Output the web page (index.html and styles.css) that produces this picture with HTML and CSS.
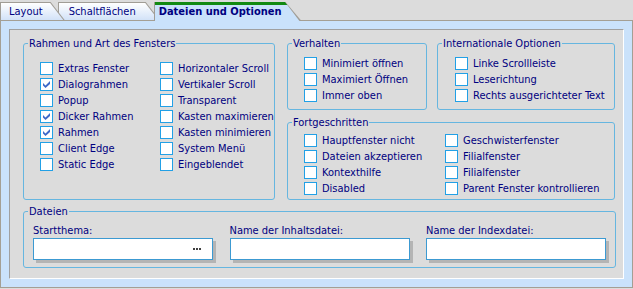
FILE: index.html
```html
<!DOCTYPE html>
<html>
  <head>
    <meta charset="utf-8">
    <title>Dateien und Optionen</title>
    <link rel="stylesheet" href="styles.css">
  </head>
  <body>
    <div class="tabs">
      <div class="tab tab-first"><div class="tab-in">Layout</div></div>
      <div class="tab tab-second"><div class="tab-in">Schaltflächen</div></div>
      <div class="tab tab-active"><div class="tab-in">Dateien und Optionen</div></div>
    </div>
    <div class="panel">
      <div class="page">
        <div class="top">
          <fieldset class="group">
            <legend>Rahmen und Art des Fensters</legend>
            <div class="checks checks-frame">
              <label class="check"><span class="box"></span>Extras Fenster</label>
              <label class="check"><span class="box checked"><svg width="11" height="11" viewBox="0 0 11 11"><polygon points="2,4 4.5,6.5 9,2 9,5 4.5,9 2,6.5"/></svg></span>Dialograhmen</label>
              <label class="check"><span class="box"></span>Popup</label>
              <label class="check"><span class="box checked"><svg width="11" height="11" viewBox="0 0 11 11"><polygon points="2,4 4.5,6.5 9,2 9,5 4.5,9 2,6.5"/></svg></span>Dicker Rahmen</label>
              <label class="check"><span class="box checked"><svg width="11" height="11" viewBox="0 0 11 11"><polygon points="2,4 4.5,6.5 9,2 9,5 4.5,9 2,6.5"/></svg></span>Rahmen</label>
              <label class="check"><span class="box"></span>Client Edge</label>
              <label class="check"><span class="box"></span>Static Edge</label>
              <label class="check"><span class="box"></span>Horizontaler Scroll</label>
              <label class="check"><span class="box"></span>Vertikaler Scroll</label>
              <label class="check"><span class="box"></span>Transparent</label>
              <label class="check"><span class="box"></span>Kasten maximieren</label>
              <label class="check"><span class="box"></span>Kasten minimieren</label>
              <label class="check"><span class="box"></span>System Menü</label>
              <label class="check"><span class="box"></span>Eingeblendet</label>
            </div>
          </fieldset>
          <div class="side">
            <div class="side-row">
              <fieldset class="group group-behaviour">
                <legend>Verhalten</legend>
                <div class="checks checks-small">
                  <label class="check"><span class="box"></span>Minimiert öffnen</label>
                  <label class="check"><span class="box"></span>Maximiert Öffnen</label>
                  <label class="check"><span class="box"></span>Immer oben</label>
                </div>
              </fieldset>
              <fieldset class="group group-intl">
                <legend>Internationale Optionen</legend>
                <div class="checks checks-small checks-intl">
                  <label class="check"><span class="box"></span>Linke Scrollleiste</label>
                  <label class="check"><span class="box"></span>Leserichtung</label>
                  <label class="check"><span class="box"></span>Rechts ausgerichteter Text</label>
                </div>
              </fieldset>
            </div>
            <fieldset class="group">
              <legend>Fortgeschritten</legend>
              <div class="checks checks-advanced">
                <label class="check"><span class="box"></span>Hauptfenster nicht</label>
                <label class="check"><span class="box"></span>Dateien akzeptieren</label>
                <label class="check"><span class="box"></span>Kontexthilfe</label>
                <label class="check"><span class="box"></span>Disabled</label>
                <label class="check"><span class="box"></span>Geschwisterfenster</label>
                <label class="check"><span class="box"></span>Filialfenster</label>
                <label class="check"><span class="box"></span>Filialfenster</label>
                <label class="check"><span class="box"></span>Parent Fenster kontrollieren</label>
              </div>
            </fieldset>
          </div>
        </div>
        <fieldset class="group group-files">
          <legend>Dateien</legend>
          <div class="fields">
            <div class="field">
              <div class="field-label">Startthema:</div>
              <div class="input"><span class="dots"></span></div>
            </div>
            <div class="field">
              <div class="field-label">Name der Inhaltsdatei:</div>
              <div class="input"></div>
            </div>
            <div class="field">
              <div class="field-label">Name der Indexdatei:</div>
              <div class="input"></div>
            </div>
          </div>
        </fieldset>
      </div>
    </div>
  </body>
</html>
```

FILE: styles.css
```css
body {
  margin: 0;
  background-color: #dcdcdc;
  font-family: "DejaVu Sans Condensed", "DejaVu Sans", sans-serif;
  font-size: 11px;
  color: #000080;
}

/* tab strip */
.tabs {
  position: relative;
  z-index: 1;
  display: flex;
  height: 20px;
  padding-top: 2px;
  box-sizing: border-box;
}
.tab {
  height: 18px;
  box-sizing: border-box;
  padding: 1px 0 0 1px;
  background-color: #a09d96;
  clip-path: polygon(0 0, calc(100% - 14px) 0, 100% 100%, 0 100%);
}
.tab-in {
  height: 100%;
  padding: 0 22px 0 8px;
  line-height: 17px;
  white-space: nowrap;
  background: linear-gradient(#ffffff, #d2e2f8);
  clip-path: polygon(0 0, calc(100% - 14.5px) 0, calc(100% - 1.3px) 100%, 0 100%);
}
.tab-first {
  position: relative;
  z-index: 2;
}
.tab-second {
  margin-left: -7px;
}
.tab-second .tab-in {
  padding-left: 10px;
  padding-right: 24px;
}
.tab-active {
  position: relative;
  z-index: 3;
  height: 19px;
  margin-left: -6px;
  padding-top: 0;
  clip-path: polygon(0 0, calc(100% - 16px) 0, 100% 100%, 0 100%);
}
.tab-active .tab-in {
  padding: 1px 20px 0 4px;
  font-weight: bold;
  background: linear-gradient(#128a12 0, #128a12 3px, #cae2fb 3px);
  clip-path: polygon(0 0, calc(100% - 16.5px) 0, calc(100% - 1.3px) 100%, 0 100%);
}

/* panel */
.panel {
  border: 1px solid #a49f94;
  background-color: #cae2fb;
  padding: 8px;
}
.page {
  border: 1px solid;
  border-color: #a0a0a0 #ffffff #ffffff #a0a0a0;
  background-color: #dcdcdc;
  padding: 7px 7px 10px 13px;
}
.top {
  display: grid;
  grid-template-columns: 252px 328px;
  column-gap: 12px;
}
.side {
  display: flex;
  flex-direction: column;
  gap: 6px;
}
.side-row {
  display: flex;
  gap: 10px;
}

/* group boxes */
.group {
  margin: 0;
  padding: 0;
  min-width: 0;
  border: 1px solid #66b6e0;
  border-radius: 3px;
}
.group legend {
  margin-left: 4px;
  padding: 0 1px;
  line-height: 13px;
}
.group-behaviour {
  width: 140px;
  box-sizing: border-box;
}
.group-intl {
  flex: 1;
}
.group-files {
  margin-top: 5px;
}

/* checkboxes */
.checks {
  display: grid;
  grid-auto-rows: 16px;
  padding-left: 16px;
}
.checks-frame {
  grid-template-rows: repeat(7, 16px);
  grid-template-columns: 120px auto;
  grid-auto-flow: column;
  padding-top: 11px;
}
.checks-small {
  padding-top: 6px;
  padding-bottom: 5px;
}
.checks-intl {
  padding-left: 17px;
}
.checks-advanced {
  grid-template-rows: repeat(4, 16px);
  grid-template-columns: 141px auto;
  grid-auto-flow: column;
  padding-top: 4px;
  padding-bottom: 2px;
}
.check {
  display: flex;
  align-items: flex-start;
  gap: 5px;
  line-height: 15px;
  white-space: nowrap;
}
.box {
  width: 13px;
  height: 13px;
  margin-top: 1px;
  box-sizing: border-box;
  border: 1px solid #22a0e6;
  background-color: #ffffff;
  flex: none;
}
.box svg {
  display: block;
  fill: #3d68c9;
}

/* file fields */
.fields {
  display: grid;
  grid-template-columns: repeat(3, 180px);
  justify-content: space-between;
  padding: 6px 9px 7px 9px;
}
.field-label {
  line-height: 13px;
  white-space: nowrap;
}
.input {
  height: 22px;
  margin-top: 1px;
  box-sizing: border-box;
  border: 1px solid #3c9ad2;
  background-color: #ffffff;
  box-shadow: 3px 3px 0 #b4b4b4;
  display: flex;
  justify-content: flex-end;
  align-items: center;
  padding-right: 11px;
}
.dots {
  width: 2px;
  height: 2px;
  margin-right: 6px;
  background-color: #404040;
  box-shadow: 3px 0 #404040, 6px 0 #404040;
}
```
